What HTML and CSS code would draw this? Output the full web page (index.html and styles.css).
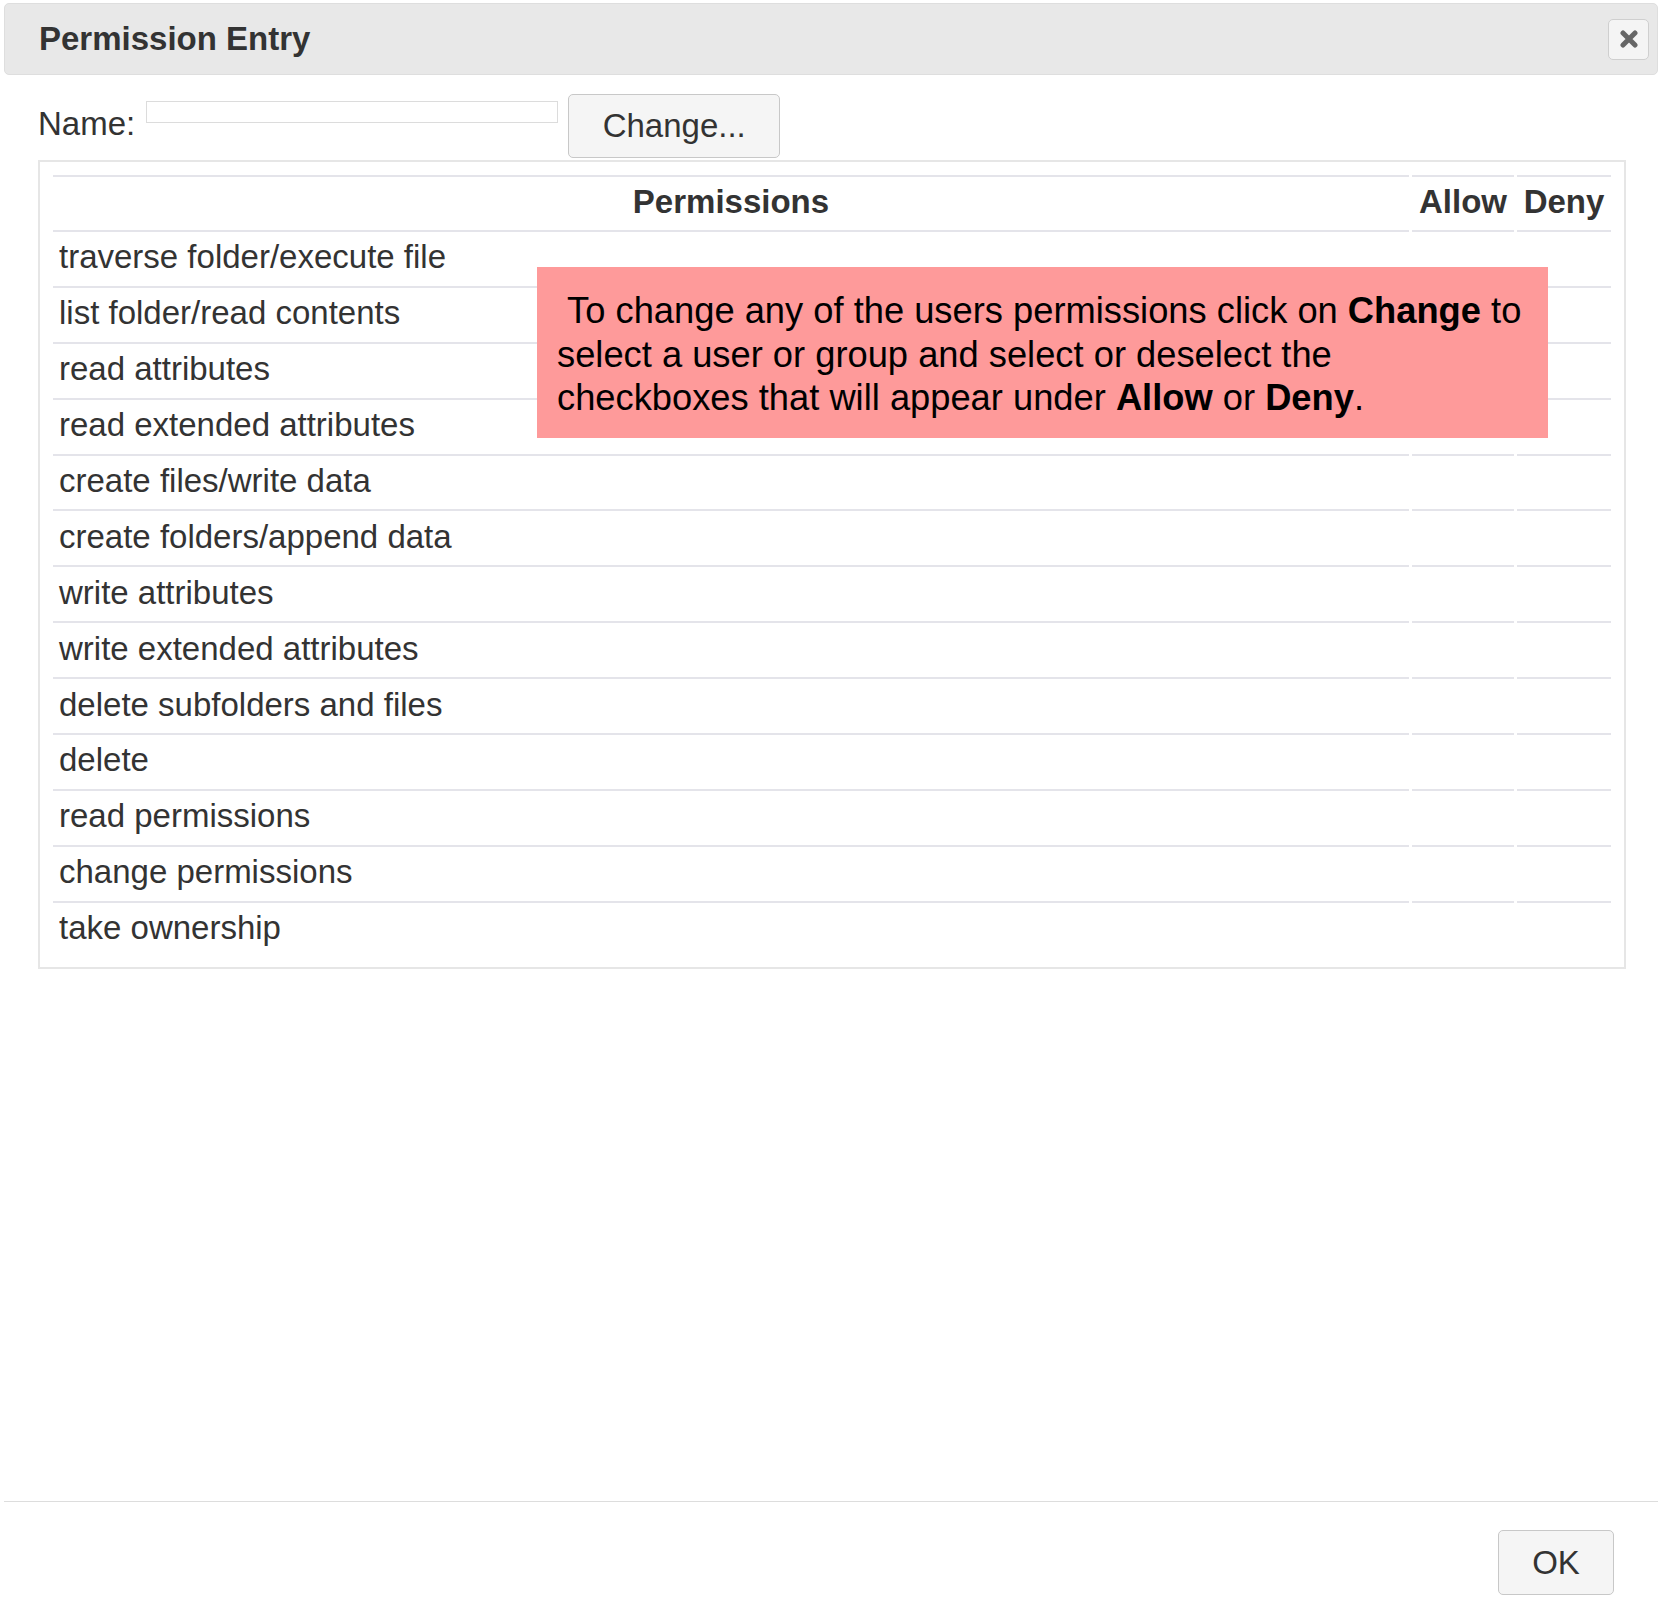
FILE: index.html
```html
<!DOCTYPE html>
<html>
<head>
<meta charset="utf-8">
<title>Permission Entry</title>
<link rel="stylesheet" href="styles.css">
</head>
<body>
<div class="dialog">
  <div class="header">
    <div class="title">Permission Entry</div>
    <button class="close" aria-label="Close">
      <svg width="18" height="18" viewBox="0 0 18 18"><path d="M3 3 L15 15 M15 3 L3 15" stroke="#666" stroke-width="5" stroke-linecap="round" fill="none"/></svg>
    </button>
  </div>
  <div class="content">
    <div class="name-row">
      <span class="name-label">Name:</span>
      <input class="name-input" type="text">
      <button class="btn change-btn">Change...</button>
    </div>
    <div class="panel">
      <table class="perm-table">
        <thead>
          <tr><th class="col-perm">Permissions</th><th class="col-allow">Allow</th><th class="col-deny">Deny</th></tr>
        </thead>
        <tbody>
          <tr><td>traverse folder/execute file</td><td></td><td></td></tr>
          <tr><td>list folder/read contents</td><td></td><td></td></tr>
          <tr><td>read attributes</td><td></td><td></td></tr>
          <tr><td>read extended attributes</td><td></td><td></td></tr>
          <tr><td>create files/write data</td><td></td><td></td></tr>
          <tr><td>create folders/append data</td><td></td><td></td></tr>
          <tr><td>write attributes</td><td></td><td></td></tr>
          <tr><td>write extended attributes</td><td></td><td></td></tr>
          <tr><td>delete subfolders and files</td><td></td><td></td></tr>
          <tr><td>delete</td><td></td><td></td></tr>
          <tr><td>read permissions</td><td></td><td></td></tr>
          <tr><td>change permissions</td><td></td><td></td></tr>
          <tr class="last"><td>take ownership</td><td></td><td></td></tr>
        </tbody>
      </table>
      <div class="note">&nbsp;To change any of the users permissions click on <b>Change</b> to<br>select a user or group and select or deselect the<br>checkboxes that will appear under <b>Allow</b> or <b>Deny</b>.</div>
    </div>
  </div>
  <div class="footer">
    <button class="btn ok-btn">OK</button>
  </div>
</div>
</body>
</html>
```

FILE: styles.css
```css
html, body {
  margin: 0;
  padding: 0;
  background: #ffffff;
}
body {
  font-family: "Liberation Sans", Arial, sans-serif;
  font-size: 33px;
  color: #333333;
}
.dialog {
  margin: 3px 0 0 4px;
  width: 1654px;
  height: 1621px;
  display: flex;
  flex-direction: column;
  box-sizing: border-box;
}
.header {
  height: 72px;
  box-sizing: border-box;
  background: #e8e8e8;
  border: 1px solid #dedede;
  border-radius: 5px;
  display: flex;
  align-items: center;
  justify-content: space-between;
  padding: 0 8px 0 34px;
  flex: none;
}
.title {
  font-weight: bold;
  font-size: 33px;
  color: #333;
}
.close {
  width: 41px;
  height: 41px;
  box-sizing: border-box;
  border: 1px solid #cfcfcf;
  border-radius: 5px;
  background: #f4f4f4;
  display: flex;
  align-items: center;
  justify-content: center;
  padding: 0;
}
.content {
  flex: 1;
  padding: 19px 31px 0 34px;
}
.name-row {
  display: flex;
  align-items: flex-start;
  height: 64px;
}
.name-label {
  line-height: 38px;
  margin-top: 11px;
}
.name-input {
  margin: 7px 0 0 11px;
  width: 412px;
  height: 22px;
  box-sizing: border-box;
  border: 1px solid #dcdcdc;
  background: #fff;
  padding: 0;
}
.btn {
  font-family: "Liberation Sans", Arial, sans-serif;
  font-size: 33px;
  color: #333;
  background: #f5f5f5;
  border: 1px solid #c8c8c8;
  border-radius: 5px;
  box-sizing: border-box;
  padding: 0;
}
.change-btn {
  margin-left: 10px;
  width: 212px;
  height: 64px;
}
.panel {
  position: relative;
  margin-top: 2px;
  width: 1588px;
  box-sizing: border-box;
  border: 2px solid #e6e6e6;
  padding: 13px 10px 10px 10px;
}
.perm-table {
  width: 100%;
  border-collapse: separate;
  border-spacing: 3px 0;
}
.perm-table th,
.perm-table td {
  border-top: 2px solid #e4e4ea;
  box-sizing: content-box;
  padding: 0 6px 3px 6px;
  vertical-align: middle;
  font-size: 33px;
  color: #333;
}
.perm-table th {
  font-weight: bold;
  text-align: center;
  height: 50px;
}
.perm-table td {
  text-align: left;
  height: 50.9px;
}
.col-allow {
  width: 90px;
}
.col-deny {
  width: 82px;
}
.note {
  position: absolute;
  left: 497px;
  top: 105px;
  width: 1011px;
  height: 171px;
  box-sizing: border-box;
  background: #fe9a9a;
  color: #000;
  font-size: 36.3px;
  line-height: 43.6px;
  padding: 22px 0 0 20px;
  white-space: nowrap;
}
.footer {
  flex: none;
  border-top: 1px solid #dddddd;
  padding: 28px 44px 29px 0;
  display: flex;
  justify-content: flex-end;
}
.ok-btn {
  width: 116px;
  height: 65px;
}
```
